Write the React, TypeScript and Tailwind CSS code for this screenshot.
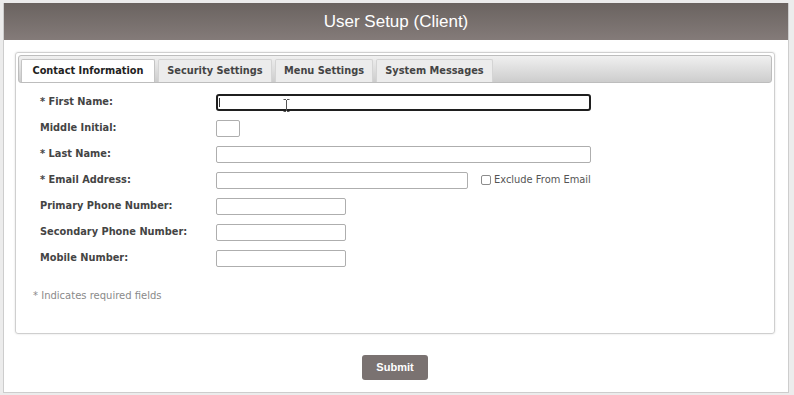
import React from 'react';

const labelFont = { fontFamily: '"DejaVu Sans", Verdana, sans-serif' };

type Row = { label: string; width: string; focus?: boolean; extra?: boolean };

const ROWS: Row[] = [
    { label: '* First Name:', width: 'w-[375px]', focus: true },
    { label: 'Middle Initial:', width: 'w-[24px]' },
    { label: '* Last Name:', width: 'w-[375px]' },
    { label: '* Email Address:', width: 'w-[252px]', extra: true },
    { label: 'Primary Phone Number:', width: 'w-[130px]' },
    { label: 'Secondary Phone Number:', width: 'w-[130px]' },
    { label: 'Mobile Number:', width: 'w-[130px]' },
];

const TABS = [
    { t: 'Contact Information', w: 'w-[134px]' },
    { t: 'Security Settings', w: 'w-[114px]' },
    { t: 'Menu Settings', w: 'w-[98px]' },
    { t: 'System Messages', w: 'w-[117px]' },
];

const App: React.FC = () => {
    return (
        <div className="w-[794px] h-[395px] bg-[#ececec] pt-[3px] pl-[3px] overflow-hidden">
            <div className="w-[786px] h-[390px] bg-white border border-[#cdcdcd] border-t-0">
                {/* Header */}
                <div className="h-[37px] bg-gradient-to-b from-[#6a6360] to-[#847b79] flex items-center justify-center">
                    <span className="text-white text-[17px]" style={{ fontFamily: '"Liberation Sans", Arial, sans-serif' }}>User Setup (Client)</span>
                </div>

                {/* Panel */}
                <div className="ml-[11px] mt-[12px] w-[760px] h-[282px] border border-[#cfcfcf] rounded-[3px] p-[2px] shadow-[0_0_2px_rgba(0,0,0,0.15)]">
                    <div className="h-[28px] rounded-[3px] border border-[#bdbdbd] bg-gradient-to-b from-[#f0f0f0] to-[#cdcdcd] flex items-end gap-[3px] pl-[2px]" style={labelFont}>
                        {TABS.map((tab, i) => (
                            <div
                                key={tab.t}
                                className={`h-[23px] ${tab.w} flex items-center justify-center text-[9.8px] font-bold rounded-t-[2px] border border-b-0 ${i === 0 ? 'bg-white text-[#222] border-[#c4c4c4]' : 'bg-[#ececec] text-[#444] border-[#d4d4d4]'}`}
                            >
                                {tab.t}
                            </div>
                        ))}
                    </div>

                    {/* Form */}
                    <div className="pl-[22px] pt-[6px] flex flex-col" style={labelFont}>
                        {ROWS.map((r) => (
                            <div key={r.label} className="h-[26px] flex items-center">
                                <div className="w-[176px] text-[9.8px] font-bold text-[#444]">{r.label}</div>
                                <div className={`relative h-[17px] rounded-[2px] bg-white ${r.width} ${r.focus ? 'border-2 border-[#1f1f1f] rounded-[3px]' : 'border border-[#aeaeae]'}`}>
                                    {r.focus && (
                                        <>
                                            <span className="absolute left-[1px] top-[2px] w-px h-[9px] bg-[#333]" />
                                            <svg className="absolute left-[65px] top-[3px]" width="7" height="13" viewBox="0 0 7 13">
                                                <path d="M0.5 0.5h2.5M4 0.5h2.5M3.5 1v11M0.5 12.5h2.5M4 12.5h2.5" stroke="#555" strokeWidth="1" fill="none" />
                                            </svg>
                                        </>
                                    )}
                                </div>
                                {r.extra && (
                                    <label className="ml-[13px] flex items-center gap-[3px] text-[9.9px] text-[#555]">
                                        <span className="w-[10px] h-[10px] border border-[#8c8c8c] rounded-[2px] bg-white" />
                                        Exclude From Email
                                    </label>
                                )}
                            </div>
                        ))}
                        <div className="mt-[17px] -ml-[7px] text-[10px] text-[#8a8a8a]">* Indicates required fields</div>
                    </div>
                </div>

                {/* Submit */}
                <div className="flex justify-center mt-[21px] pr-[2px]">
                    <button className="w-[66px] h-[25px] rounded-[3px] bg-[#7a7271] text-white text-[11px] font-bold" style={{ fontFamily: '"Liberation Sans", Arial, sans-serif' }}>
                        Submit
                    </button>
                </div>
            </div>
        </div>
    );
};

export default App;
